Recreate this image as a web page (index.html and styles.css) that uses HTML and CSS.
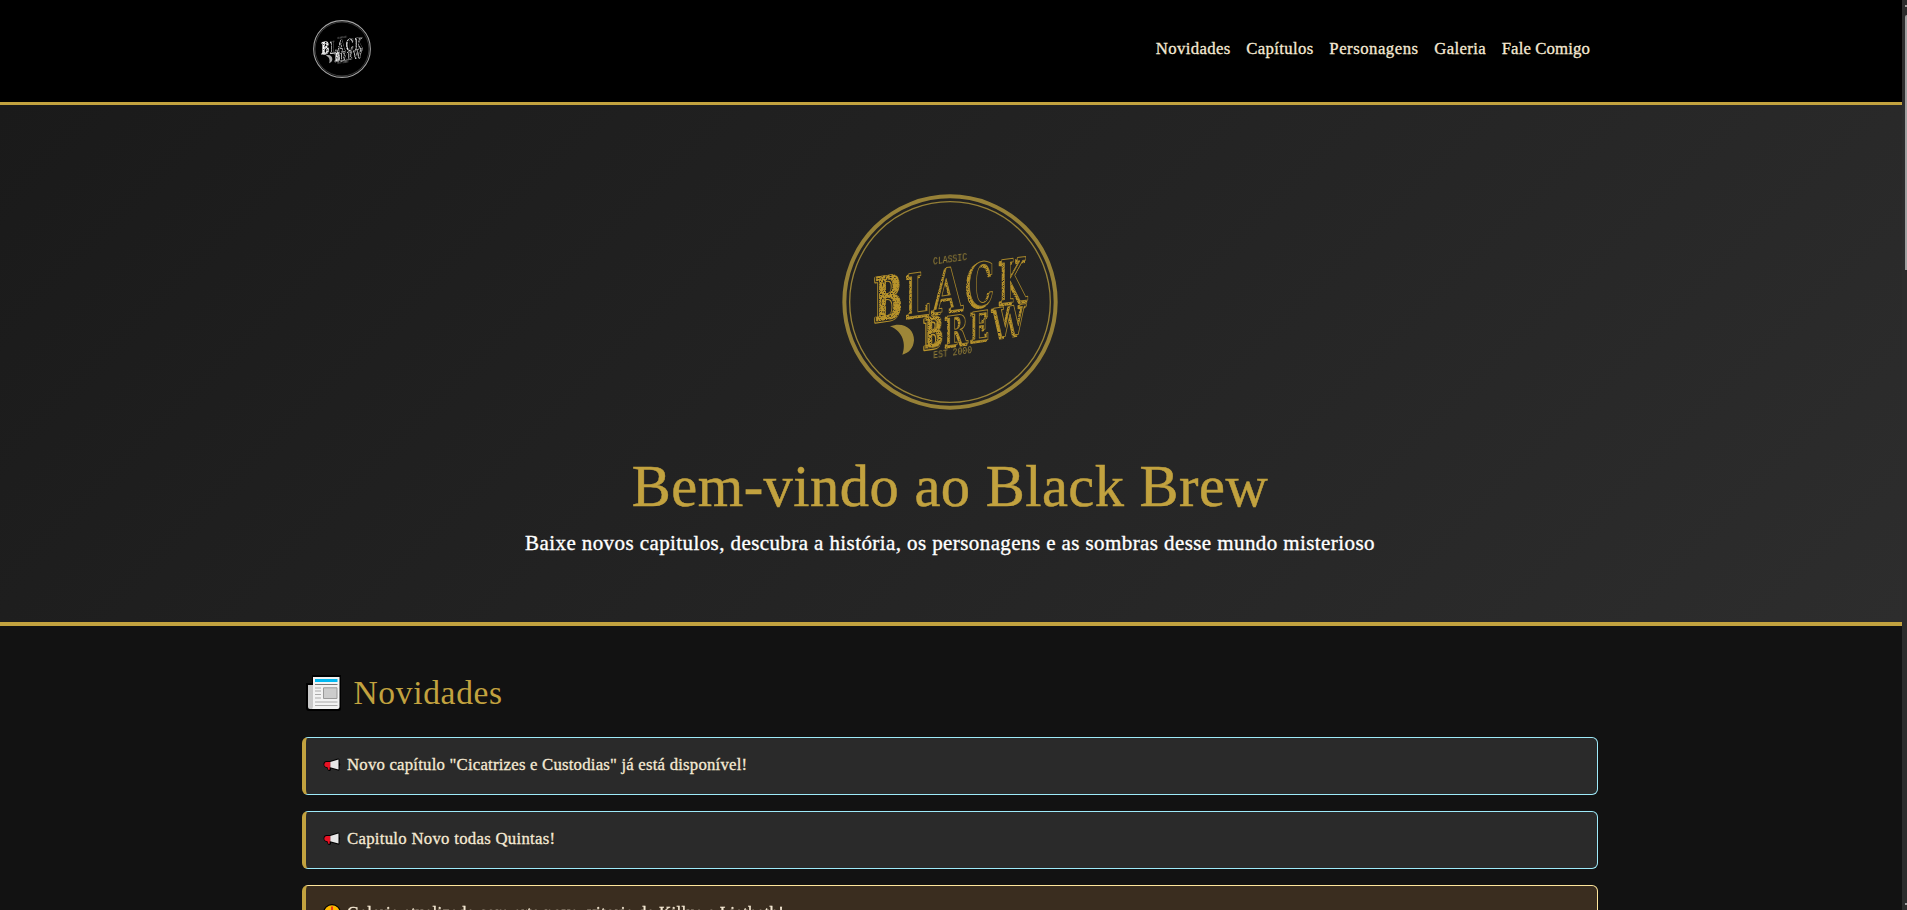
FILE: index.html
```html
<!DOCTYPE html>
<html lang="pt-BR">
<head>
<meta charset="utf-8">
<title>Black Brew</title>
<link rel="stylesheet" href="styles.css">
</head>
<body>
<svg class="defs" width="0" height="0" aria-hidden="true">
  <defs>
    <filter id="worn" x="-5%" y="-5%" width="110%" height="110%">
      <feTurbulence type="fractalNoise" baseFrequency="0.35" numOctaves="2" seed="4" result="n"/>
      <feColorMatrix in="n" type="matrix" values="0 0 0 0 0  0 0 0 0 0  0 0 0 0 0  0 0 0 -4 3.1" result="m"/>
      <feComposite in="SourceGraphic" in2="m" operator="in"/>
    </filter>
    <symbol id="brew-logo" viewBox="37 43 648 648">
      <g class="rings">
        <circle cx="361" cy="367" r="317" stroke-width="12"/>
        <circle cx="361" cy="367" r="301" stroke-width="4"/>
      </g>
      <g class="tiny">
        <text transform="translate(310 255) skewY(-8)" font-size="30" textLength="102" lengthAdjust="spacingAndGlyphs">CLASSIC</text>
        <text transform="translate(311 536) skewY(-8)" font-size="32" textLength="116" lengthAdjust="spacingAndGlyphs">EST 2000</text>
      </g>
      <path class="moon" d="M181 440C222 424 254 448 253 482C251 506 238 520 218 525C229 496 222 456 181 440Z"/>
      <g class="shade">
        <text transform="translate(226 419) skewY(-8)" font-size="178" textLength="72" lengthAdjust="spacingAndGlyphs">L</text>
        <text transform="translate(306 406) skewY(-8)" font-size="182" textLength="92" lengthAdjust="spacingAndGlyphs">A</text>
        <text transform="translate(407 389) skewY(-8)" font-size="178" textLength="82" lengthAdjust="spacingAndGlyphs">C</text>
        <text transform="translate(504 379) skewY(-8)" font-size="180" textLength="84" lengthAdjust="spacingAndGlyphs">K</text>
        <text transform="translate(343 505) skewY(-8)" font-size="124" textLength="68" lengthAdjust="spacingAndGlyphs">R</text>
        <text transform="translate(420 491) skewY(-8)" font-size="122" textLength="54" lengthAdjust="spacingAndGlyphs">E</text>
        <text transform="translate(486 480) skewY(-8)" font-size="124" textLength="98" lengthAdjust="spacingAndGlyphs">W</text>
      </g>
      <g class="face">
        <text transform="translate(233 413) skewY(-8)" font-size="178" textLength="68" lengthAdjust="spacingAndGlyphs">L</text>
        <text transform="translate(314 400) skewY(-8)" font-size="180" textLength="86" lengthAdjust="spacingAndGlyphs">A</text>
        <text transform="translate(416 383) skewY(-8)" font-size="178" textLength="78" lengthAdjust="spacingAndGlyphs">C</text>
        <text transform="translate(512 372) skewY(-8)" font-size="180" textLength="80" lengthAdjust="spacingAndGlyphs">K</text>
        <text transform="translate(349 499) skewY(-8)" font-size="122" textLength="66" lengthAdjust="spacingAndGlyphs">R</text>
        <text transform="translate(426 486) skewY(-8)" font-size="122" textLength="52" lengthAdjust="spacingAndGlyphs">E</text>
        <text transform="translate(493 474) skewY(-8)" font-size="122" textLength="96" lengthAdjust="spacingAndGlyphs">W</text>
      </g>
      <g class="halo">
        <text transform="translate(132 428) skewY(-8)" font-size="180" textLength="82" lengthAdjust="spacingAndGlyphs">B</text>
        <text transform="translate(281 510) skewY(-8)" font-size="122" textLength="56" lengthAdjust="spacingAndGlyphs">B</text>
      </g>
      <g class="gap">
        <text transform="translate(134 426) skewY(-8)" font-size="180" textLength="82" lengthAdjust="spacingAndGlyphs">B</text>
        <text transform="translate(283 508) skewY(-8)" font-size="122" textLength="56" lengthAdjust="spacingAndGlyphs">B</text>
      </g>
      <g class="solid">
        <text transform="translate(136 424) skewY(-8)" font-size="180" textLength="82" lengthAdjust="spacingAndGlyphs">B</text>
        <text transform="translate(285 506) skewY(-8)" font-size="122" textLength="56" lengthAdjust="spacingAndGlyphs">B</text>
      </g>
    </symbol>
    <symbol id="megaphone" viewBox="0 0 18 14">
      <path d="M.5 6Q.5 3.3 3 3L7 3L15 .4Q16.500 .2 16.500 2V5Q18 6.500 16.500 8V11.500Q16.500 13 15 12.500L8 10.500V12Q7 13.500 5 12.500L4 10Q.5 9.500 .5 6Z" fill="#000"/>
      <path d="M7.200 4 15.500 1.500V11.600L7.200 9.300Z" fill="#e6e6e6"/>
      <path d="M1.300 6.500Q1.300 4 3.500 4H7.200V9.300H6.700V11.500Q6 12.400 5.200 11.500L4.500 9.300Q1.300 9.200 1.300 6.500Z" fill="#e81224"/>
    </symbol>
  </defs>
</svg>

<div class="viewport">
  <div class="page">
    <header class="topbar">
      <div class="topbar-inner">
        <svg class="brand"><use href="#brew-logo"/></svg>
        <nav class="nav">
          <a class="n1">Novidades</a>
          <a class="n2">Capítulos</a>
          <a class="n3">Personagens</a>
          <a class="n4">Galeria</a>
          <a class="n5">Fale Comigo</a>
        </nav>
      </div>
    </header>

    <section class="hero">
      <svg class="hero-logo"><use href="#brew-logo"/></svg>
      <h1 class="hero-title">Bem-vindo ao Black Brew</h1>
      <p class="hero-lead">Baixe novos capitulos, descubra a história, os personagens e as sombras desse mundo misterioso</p>
    </section>

    <main class="news">
      <h2 class="news-title">
        <svg class="paper" viewBox="0 0 36 36">
          <path d="M6 0H35V34Q35 36 33 36H3Q0 36 0 33V8H6Z" fill="#000"/>
          <path d="M2 10H7V34H4Q2 34 2 32Z" fill="#c8c8c8"/>
          <path d="M7 2H33.500V32Q33.500 34 31.500 34H6Q7 33 7 31Z" fill="#f2f2f2"/>
          <path d="M9 4H31.500V7H9Z" fill="#00b7f0"/>
          <path d="M9 9.500H31.500" stroke="#777" stroke-width="1"/>
          <path d="M9 13H15M9 16H15M9 19.500H15M9 23H15M9 27H31.500M9 30.500H31.500" stroke="#aaa" stroke-width="1"/>
          <path d="M17.500 12.800H31V23.500H17.500Z" fill="#ccc" stroke="#999" stroke-width="1"/>
        </svg>
        <span>Novidades</span>
      </h2>
      <ul class="cards">
        <li class="card"><svg class="mega"><use href="#megaphone"/></svg><span class="c1">Novo capítulo "Cicatrizes e Custodias" já está disponível!</span></li>
        <li class="card"><svg class="mega"><use href="#megaphone"/></svg><span class="c2">Capitulo Novo todas Quintas!</span></li>
        <li class="card card-warm">
          <svg class="alert" viewBox="0 0 18 18"><circle cx="9" cy="9" r="8.900" fill="#000"/><circle cx="9" cy="9" r="7.800" fill="#ffb900"/><path d="M9 2.500V10" stroke="#f03a17" stroke-width="2"/><circle cx="9" cy="13" r="1.300" fill="#f03a17"/></svg>
          <span class="c3">Galeria atualizada com arte nova, vitoria de Killua e Liathath!</span>
        </li>
      </ul>
    </main>
  </div>
  <div class="scroll"><i class="arrow-up"></i><i class="thumb"></i><i class="arrow-down"></i></div>
</div>
</body>
</html>
```
FILE: styles.css
```css
* { box-sizing: border-box; }
body {
  margin: 0;
  height: 910px;
  overflow: hidden;
  background: #121212;
  color: #f5e9d3;
  font-family: "Liberation Serif", serif;
  font-size: 16.75px;
}
.defs { display: block; }
.viewport { display: flex; height: 910px; overflow: hidden; }
.page { width: 1902px; }

.topbar { height: 105px; background: #000; border-bottom: 3px solid #c2a23f; }
.topbar-inner {
  display: flex;
  justify-content: space-between;
  align-items: center;
  width: 1277px;
  height: 98px;
  margin-left: 313px;
}
.brand { width: 58px; height: 58px; color: #b4b4b4; --ink: #000; --bold: #fff; --mix: #888; }
.nav { display: flex; gap: 15.7px; margin-top: -1px; letter-spacing: 0.35px; -webkit-text-stroke: 0.3px; }
.n3 { letter-spacing: 0.5px; }
.n5 { letter-spacing: 0.12px; }

.rings { fill: none; stroke: currentColor; opacity: .9; }
.tiny { fill: currentColor; font-family: "Liberation Mono", monospace; opacity: .95; }
.moon { fill: currentColor; opacity: .95; }
.shade, .face, .halo, .gap, .solid { font-family: "DejaVu Serif Condensed", "DejaVu Serif", serif; font-weight: bold; stroke-linejoin: round; }
.shade { fill: var(--bold); filter: url(#worn); stroke: var(--bold); stroke-width: 5; }
.face { fill: var(--ink); stroke: var(--mix); stroke-width: 3; }
.halo { fill: var(--bold); stroke: var(--bold); stroke-width: 10; }
.gap { fill: var(--ink); stroke: var(--ink); stroke-width: 6; }
.solid { fill: var(--bold); stroke: var(--bold); stroke-width: 4; filter: url(#worn); }

.hero {
  display: flex;
  flex-direction: column;
  align-items: center;
  height: 521px;
  padding: 89px 2px 0 0;
  background: linear-gradient(135deg, #1a1a1a, #2d2d2d);
  border-bottom: 4px solid #c2a23f;
}
.hero-logo { width: 216px; height: 216px; color: #a48c3a; --ink: #232323; --bold: #b8932b; --mix: #a5852b; }
.hero-title { margin: 43px 0 0; font-size: 58.5px; line-height: 67px; font-weight: 400; color: #c2a23f; white-space: nowrap; letter-spacing: 0.48px; -webkit-text-stroke: 0.5px; }
.hero-lead { margin: 8px 0 0; font-size: 21px; line-height: 30px; color: #fff; white-space: nowrap; letter-spacing: 0.41px; -webkit-text-stroke: 0.35px; }

.news { width: 1296px; margin-left: 302px; padding-top: 48px; }
.news-title { display: flex; align-items: center; gap: 11.500px; height: 38px; margin: 0 0 25px 4px; font-size: 33.5px; font-weight: 400; color: #c2a23f; letter-spacing: 0.67px; }
.paper { width: 36px; height: 36px; }
.cards { display: flex; flex-direction: column; gap: 16px; margin: 0; padding: 0; list-style: none; }
.card {
  display: flex;
  align-items: center;
  height: 58px;
  padding: 0 16px 2px 17px;
  background: #2a2a2a;
  border: 1px solid #9eeaf9;
  border-left: 4px solid #c2a23f;
  border-radius: 6px;
  white-space: nowrap;
  letter-spacing: 0.21px;
  -webkit-text-stroke: 0.3px;
}
.c2 { letter-spacing: 0.28px; }
.c3 { letter-spacing: 0.34px; }
.card-warm { background: #3a2d1f; border-color: #ffe69c; border-left-color: #c2a23f; }
.mega { width: 18px; height: 14px; margin-right: 6px; }
.alert { width: 18px; height: 18px; margin-right: 6px; }

.scroll { display: flex; flex-direction: column; align-items: flex-end; width: 5px; height: 910px; background: #2c2c2c; }
.arrow-up { width: 2px; height: 2px; margin-top: 5px; background: #9f9f9f; }
.thumb { width: 2px; height: 255px; margin-top: 8px; background: #9f9f9f; border-top-left-radius: 2px; }
.arrow-down { width: 2px; height: 2px; margin-top: auto; margin-bottom: 5px; background: #9f9f9f; }
```
